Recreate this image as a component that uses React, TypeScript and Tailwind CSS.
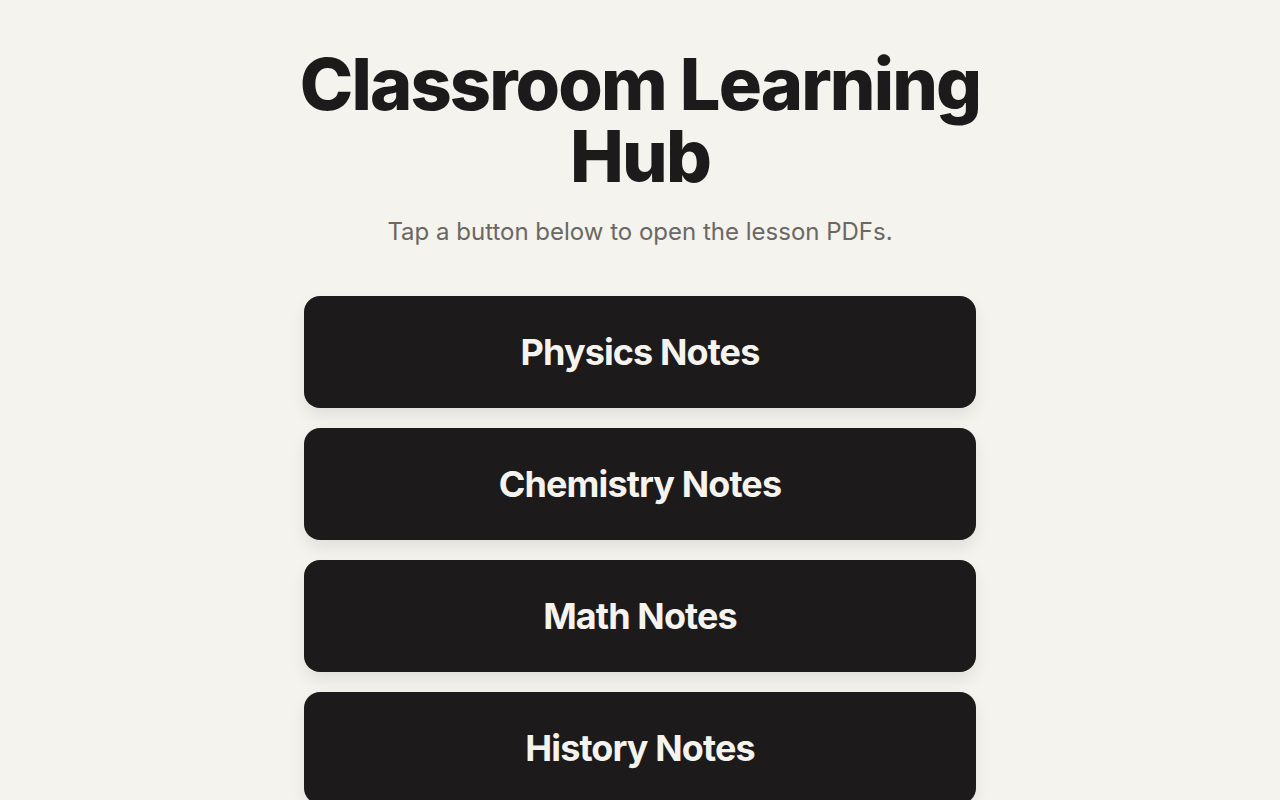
const subjects = ['Physics Notes', 'Chemistry Notes', 'Math Notes', 'History Notes'];

export default function App() {
  return (
    <div
      className="min-h-screen bg-[#f4f3ee] px-6 pt-12 pb-16 text-[#1c1a1b]"
      style={{ fontFamily: 'Inter, "Noto Sans", sans-serif' }}
    >
      <header className="mx-auto max-w-3xl text-center">
        <h1 className="text-[72px] leading-[72px] font-extrabold tracking-[-0.026em]">
          Classroom Learning Hub
        </h1>
        <p className="mt-6 text-2xl leading-8 text-[#6b6763]">
          Tap a button below to open the lesson PDFs.
        </p>
      </header>

      <nav className="mx-auto mt-12 flex max-w-[672px] flex-col gap-5">
        {subjects.map((subject) => (
          <a
            key={subject}
            href="#"
            className="flex h-28 items-center justify-center rounded-2xl bg-[#1c1a1b] text-[36px] font-bold tracking-[-0.025em] text-[#f4f3ee] shadow-[0_8px_16px_rgba(0,0,0,0.08)]"
          >
            {subject}
          </a>
        ))}
      </nav>
    </div>
  );
}
